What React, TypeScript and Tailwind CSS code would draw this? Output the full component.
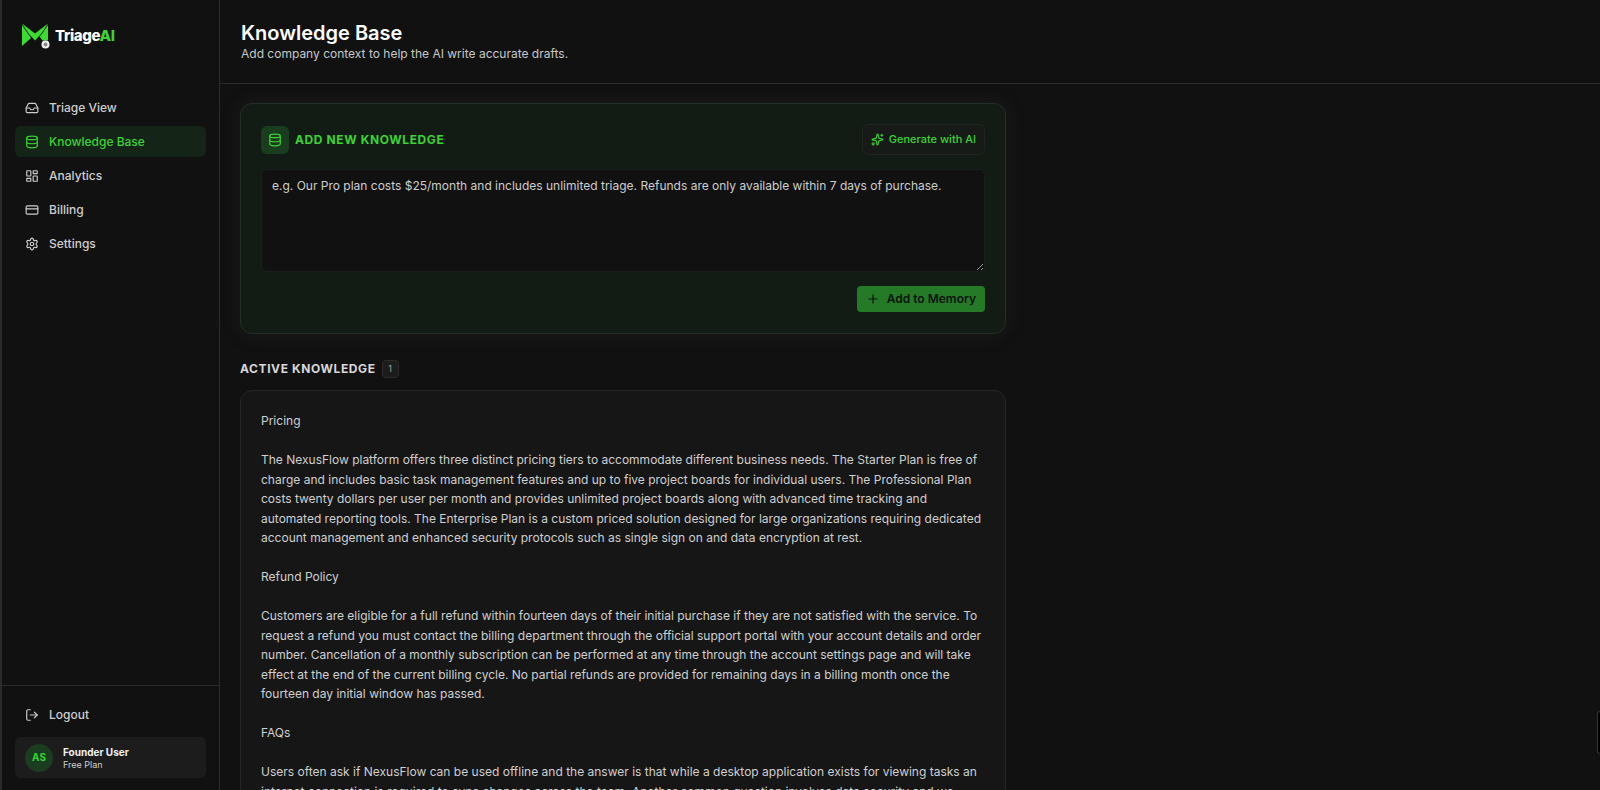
import { CreditCard, Database, Inbox, LayoutDashboard, LogOut, Plus, Settings, Sparkles } from 'lucide-react';
import type { LucideIcon } from 'lucide-react';
import { clsx } from 'clsx';

interface NavItem {
  label: string;
  icon: LucideIcon;
  active?: boolean;
}

const navItems: NavItem[] = [
  { label: 'Triage View', icon: Inbox },
  { label: 'Knowledge Base', icon: Database, active: true },
  { label: 'Analytics', icon: LayoutDashboard },
  { label: 'Billing', icon: CreditCard },
  { label: 'Settings', icon: Settings },
];

const knowledge = [
  `Pricing

The NexusFlow platform offers three distinct pricing tiers to accommodate different business needs. The Starter Plan is free of charge and includes basic task management features and up to five project boards for individual users. The Professional Plan costs twenty dollars per user per month and provides unlimited project boards along with advanced time tracking and automated reporting tools. The Enterprise Plan is a custom priced solution designed for large organizations requiring dedicated account management and enhanced security protocols such as single sign on and data encryption at rest.

Refund Policy

Customers are eligible for a full refund within fourteen days of their initial purchase if they are not satisfied with the service. To request a refund you must contact the billing department through the official support portal with your account details and order number. Cancellation of a monthly subscription can be performed at any time through the account settings page and will take effect at the end of the current billing cycle. No partial refunds are provided for remaining days in a billing month once the fourteen day initial window has passed.

FAQs

Users often ask if NexusFlow can be used offline and the answer is that while a desktop application exists for viewing tasks an internet connection is required to sync changes across the team. Another common question involves data security and we`,
];

function Logo() {
  return (
    <div className="flex items-center gap-[5px] px-5 h-[72px] shrink-0">
      <svg viewBox="0 0 28 26" className="w-7 h-[26px]" aria-hidden="true">
        <g fill="#3ddc34">
          <path d="M0 0.5 L13 10.5 L26 0.5 L19 11 L13 17.5 L7 11 Z" />
          <path d="M0 2 L6.5 11.5 L9 15 L0 23 Z" />
          <path d="M26 2 L19.5 11.5 L17.5 13.5 L20.5 17.5 L26 17.5 Z" />
        </g>
        <circle cx="23.5" cy="21.5" r="3" fill="#888888" stroke="#f2f2f2" strokeWidth="2" />
      </svg>
      <span className="text-[15px] font-extrabold tracking-tight text-white">
        Triage<span className="text-[#3bd433]">AI</span>
      </span>
    </div>
  );
}

function Sidebar() {
  return (
    <aside className="flex flex-col w-[220px] shrink-0 border-l-2 border-r border-[#2b2b2b] bg-[#111111]">
      <Logo />

      <nav className="flex flex-col gap-[3px] px-[13px] pt-5">
        {navItems.map(({ label, icon: Icon, active }) => (
          <a
            key={label}
            href="#"
            className={clsx(
              'flex items-center gap-[10px] h-[31px] px-[10px] rounded-md text-xs font-medium',
              active ? 'bg-[#142417] text-[#3bd433]' : 'text-[#cecece]'
            )}
          >
            <Icon className="h-[14px] w-[14px]" />
            {label}
          </a>
        ))}
      </nav>

      <div className="mt-auto px-[13px] pt-[13px] pb-3 border-t border-[#2b2b2b]">
        <button className="flex items-center gap-[10px] h-[31px] w-full px-[10px] text-xs font-medium text-[#cecece]">
          <LogOut className="h-[14px] w-[14px]" />
          Logout
        </button>
        <div className="flex items-center gap-[10px] h-[41px] mt-[7px] px-[10px] rounded-md bg-[#1c1c1c]">
          <div className="flex items-center justify-center h-7 w-7 rounded-full bg-[#1a3d20] text-[#3bd433] text-[10px] font-bold">
            AS
          </div>
          <div>
            <p className="text-[10px] leading-[14px] font-bold text-[#f0f0f0]">Founder User</p>
            <p className="text-[9px] leading-3 text-[#cecece]">Free Plan</p>
          </div>
        </div>
      </div>
    </aside>
  );
}

function Header() {
  return (
    <header className="h-[84px] pt-[21px] px-[21px] shrink-0 border-b border-[#2b2b2b]">
      <h1 className="text-xl leading-6 font-semibold text-white">Knowledge Base</h1>
      <p className="text-xs leading-[18px] text-[#c8c8c8]">Add company context to help the AI write accurate drafts.</p>
    </header>
  );
}

function AddKnowledge() {
  return (
    <section className="p-5 pb-[21px] rounded-xl border border-[#223026] bg-[#121b14] shadow-[0_0_20px_rgba(60,70,60,0.2)]">
      <div className="flex items-center justify-between">
        <div className="flex items-center gap-[6px]">
          <span className="flex items-center justify-center h-7 w-7 rounded-md bg-[#1a3d20] text-[#3bd433]">
            <Database className="h-[14px] w-[14px]" />
          </span>
          <h2 className="text-xs font-bold tracking-wider uppercase text-[#3bd433]">Add New Knowledge</h2>
        </div>
        <button className="flex items-center gap-[5px] h-[31px] px-2 rounded-md border border-[#202522] bg-[#161b18] text-[11px] font-medium text-[#3bd433]">
          <Sparkles className="h-[13px] w-[13px]" />
          Generate with AI
        </button>
      </div>
      <textarea
        aria-label="New knowledge"
        placeholder="e.g. Our Pro plan costs $25/month and includes unlimited triage. Refunds are only available within 7 days of purchase."
        className="block w-full h-[103px] mt-[14px] px-[10px] py-[6px] rounded-md border border-[#1b1f1c] bg-[#111111] text-xs leading-relaxed text-[#d0d0d0] placeholder:text-[#cecece] focus:outline-none resize-y"
      />
      <div className="flex justify-end mt-[14px]">
        <button className="flex items-center gap-[7px] h-[26px] px-[9px] rounded bg-[#257a28] text-[#0a140b] text-xs font-semibold">
          <Plus className="h-[14px] w-[14px]" />
          Add to Memory
        </button>
      </div>
    </section>
  );
}

export default function App() {
  return (
    <div className="relative flex h-screen overflow-hidden bg-[#111111] font-['Inter',sans-serif]">
      <Sidebar />
      <main className="flex flex-col flex-1 min-w-0">
        <Header />
        <div className="flex-1 min-h-0 overflow-hidden px-5 pt-[19px]">
          <div className="max-w-[766px]">
            <AddKnowledge />

            <div className="flex items-center gap-[6px] mt-[26px] mb-3">
              <h2 className="text-xs font-bold tracking-wider uppercase text-[#d8d8d8]">Active Knowledge</h2>
              <span className="flex items-center justify-center h-[18px] w-[17px] rounded border border-[#2b2b2b] bg-[#1c1c1c] text-[9px] text-[#a0a0a0]">
                {knowledge.length}
              </span>
            </div>

            {knowledge.map((entry) => (
              <article
                key={entry}
                className="p-5 rounded-xl border border-[#262626] bg-[#161616] text-xs leading-relaxed text-[#d0d0d0] whitespace-pre-wrap"
              >
                {entry}
              </article>
            ))}
          </div>
        </div>
      </main>

      {/* side drawer handle */}
      <button
        aria-label="Open panel"
        className="absolute right-0 bottom-9 h-[43px] w-[3px] rounded-l border border-r-0 border-[#333333] bg-black"
      />
    </div>
  );
}
